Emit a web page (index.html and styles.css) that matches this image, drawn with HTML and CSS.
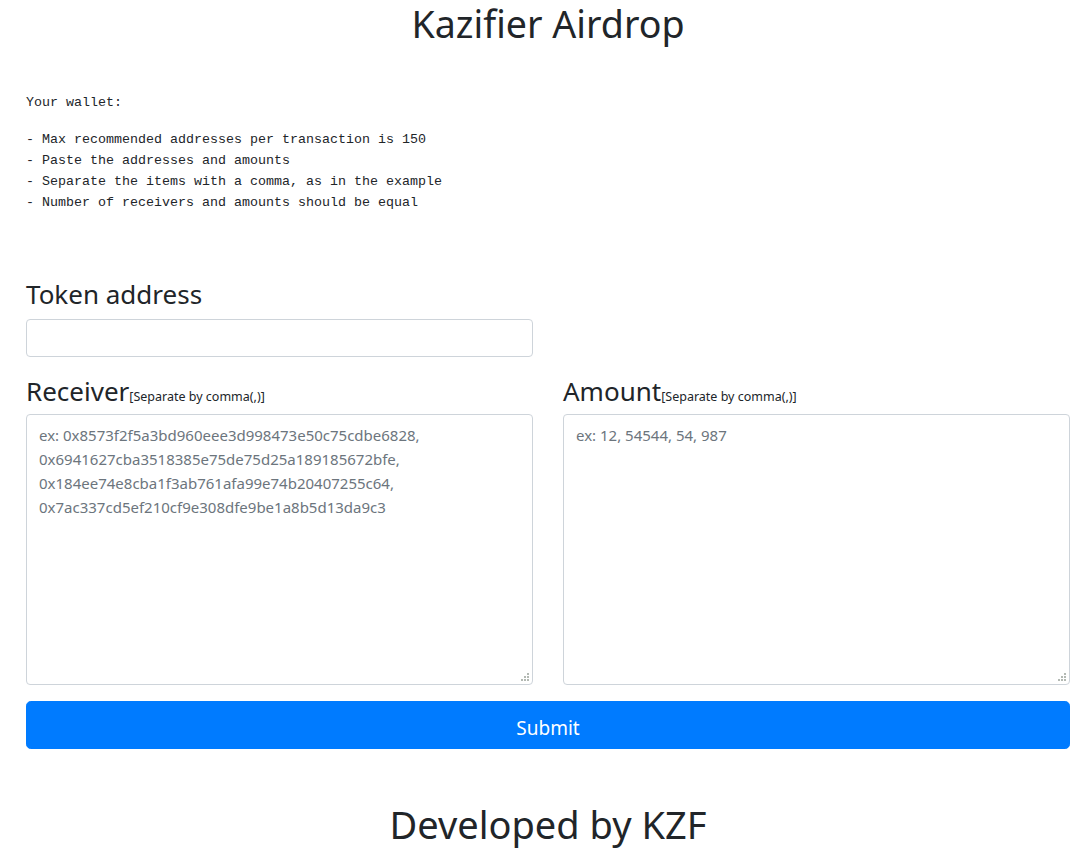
FILE: index.html
```html
<!DOCTYPE html>
<html lang="en">
<head>
<meta charset="utf-8">
<title>Kazifier Airdrop</title>
<link rel="stylesheet" href="styles.css">
</head>
<body>
<div class="page">
  <h1 class="title">Kazifier Airdrop</h1>
  <pre class="wallet">Your wallet:</pre>
  <pre class="rules">- Max recommended addresses per transaction is 150
- Paste the addresses and amounts
- Separate the items with a comma, as in the example
- Number of receivers and amounts should be equal</pre>
  <form class="form">
    <div class="token-group">
      <label class="label" for="token">Token address</label>
      <input class="field" id="token" type="text">
    </div>
    <div class="row">
      <div class="col">
        <label class="label" for="receiver">Receiver<small class="hint">[Separate by comma(,)]</small></label>
        <div class="area-wrap">
          <textarea class="field area" id="receiver" placeholder="ex: 0x8573f2f5a3bd960eee3d998473e50c75cdbe6828,
0x6941627cba3518385e75de75d25a189185672bfe,
0x184ee74e8cba1f3ab761afa99e74b20407255c64,
0x7ac337cd5ef210cf9e308dfe9be1a8b5d13da9c3"></textarea>
          <svg class="grip" width="8" height="8" viewBox="0 0 8 8" aria-hidden="true">
            <rect x="6" y="0" width="2" height="2"/>
            <rect x="3" y="3" width="2" height="2"/>
            <rect x="6" y="3" width="2" height="2"/>
            <rect x="0" y="6" width="2" height="2"/>
            <rect x="3" y="6" width="2" height="2"/>
            <rect x="6" y="6" width="2" height="2"/>
          </svg>
        </div>
      </div>
      <div class="col">
        <label class="label" for="amount">Amount<small class="hint">[Separate by comma(,)]</small></label>
        <div class="area-wrap">
          <textarea class="field area" id="amount" placeholder="ex: 12, 54544, 54, 987"></textarea>
          <svg class="grip" width="8" height="8" viewBox="0 0 8 8" aria-hidden="true">
            <rect x="6" y="0" width="2" height="2"/>
            <rect x="3" y="3" width="2" height="2"/>
            <rect x="6" y="3" width="2" height="2"/>
            <rect x="0" y="6" width="2" height="2"/>
            <rect x="3" y="6" width="2" height="2"/>
            <rect x="6" y="6" width="2" height="2"/>
          </svg>
        </div>
      </div>
    </div>
    <button class="submit" type="button">Submit</button>
  </form>
  <h1 class="footer">Developed by KZF</h1>
</div>
</body>
</html>
```

FILE: styles.css
```css
html, body {
  margin: 0;
  padding: 0;
  background: #fff;
}

body {
  font-family: "Noto Sans", "Open Sans", sans-serif;
  color: #212529;
  font-size: 16px;
  line-height: 1.5;
}

.page {
  padding: 0 13px 0 26px;
}

.title {
  margin: 0;
  text-align: center;
  font-weight: 400;
  font-size: 37.6px;
  line-height: 48px;
}

.wallet,
.rules {
  font-family: "Liberation Mono", "DejaVu Sans Mono", monospace;
  font-size: 13.33px;
  line-height: 21px;
  color: #212529;
  margin: 0;
}

.wallet {
  margin-top: 44px;
  margin-bottom: 16px;
}

.form {
  margin-top: 65px;
}

.token-group {
  width: 507px;
  display: flex;
  flex-direction: column;
}

.label {
  display: block;
  font-size: 26px;
  line-height: 33px;
  margin-bottom: 8px;
}

.hint {
  font-size: 12.5px;
  line-height: 1;
}

.row .label {
  height: 29px;
  margin-bottom: 8px;
  line-height: 29px;
  margin-top: 2px;
}

.field {
  box-sizing: border-box;
  width: 100%;
  border: 1px solid #ced4da;
  border-radius: 4px;
  height: 38px;
  padding: 6px 12px;
  font-family: inherit;
  font-size: 16px;
  line-height: 24px;
  color: #495057;
  background: #fff;
  margin: 0;
}

.row {
  display: flex;
  gap: 30px;
  margin-top: 18px;
}

.col {
  flex: 1 1 0;
  display: flex;
  flex-direction: column;
}

.area-wrap {
  position: relative;
}

.area {
  height: 271px;
  resize: none;
  display: block;
  font-size: 15px;
  padding-top: 8px;
}

.area::placeholder {
  color: #6c757d;
  opacity: 1;
}

.grip {
  position: absolute;
  right: 4px;
  bottom: 4px;
  fill: #b3b9b3;
}

.submit {
  display: block;
  width: 100%;
  margin-top: 16px;
  height: 48px;
  border: 1px solid #007bff;
  background: #007bff;
  color: #fff;
  border-radius: 4.8px;
  font-family: inherit;
  font-size: 19px;
  line-height: 30px;
  padding: 11px 16px 5px;
}

.footer {
  margin: 51px 0 0;
  text-align: center;
  font-weight: 400;
  font-size: 38px;
  line-height: 48px;
}
```
